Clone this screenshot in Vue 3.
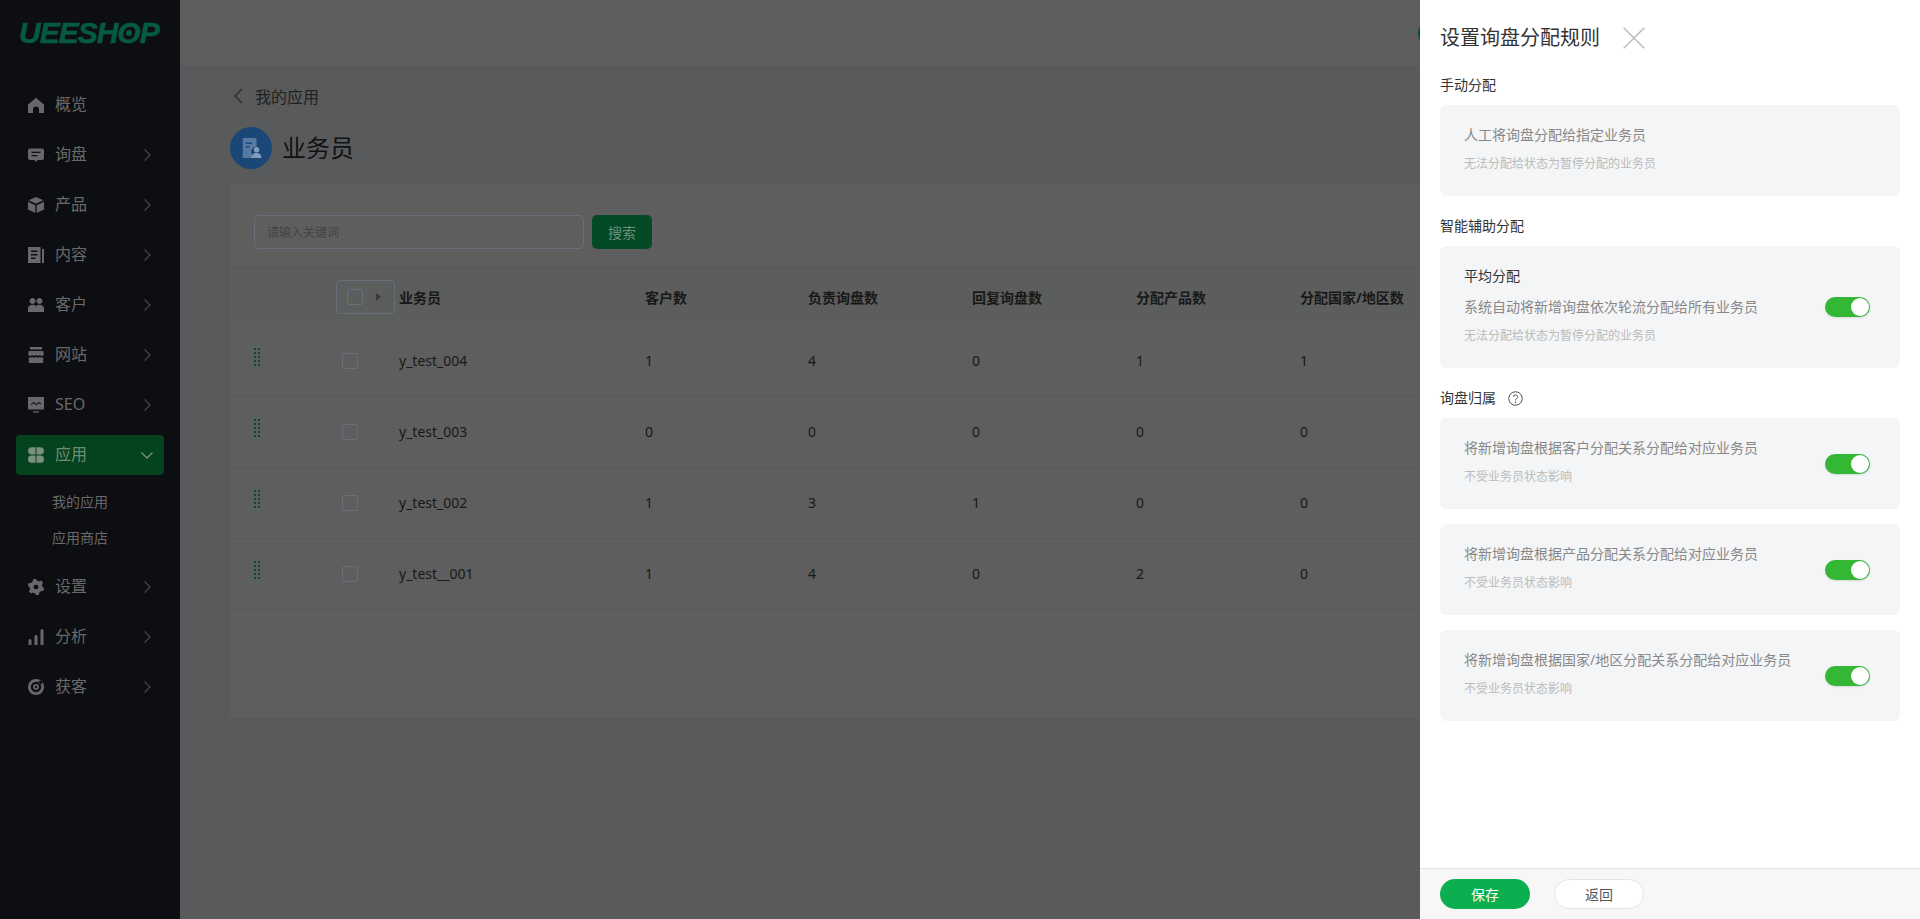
<template>
  <div class="page">
    <aside class="sidebar">
      <div class="logo">UEESH<span class="logo-o">O<i></i></span>P</div>
      <nav class="nav">
        <template v-for="item in menu" :key="item.name">
          <div class="nav-item" :class="{ active: item.open }">
            <svg class="nav-icon" viewBox="0 0 16 16"><path :d="item.icon" fill-rule="evenodd" /></svg>
            <span class="nav-text">{{ item.name }}</span>
            <svg v-if="item.arrow" class="nav-arrow" :class="{ down: item.open }" viewBox="0 0 10 14">
              <path d="M2.5 1.5 8 7l-5.500 5.500" />
            </svg>
          </div>
          <div v-if="item.open" class="sub-nav">
            <div v-for="sub in item.children" :key="sub" class="sub-item">{{ sub }}</div>
          </div>
        </template>
      </nav>
    </aside>

    <div class="main">
      <header class="topbar"><span class="avatar"></span></header>
      <section class="content">
        <div class="back">
          <svg viewBox="0 0 10 16"><path d="M9 1 2 8l7 7" /></svg>
          <span>我的应用</span>
        </div>
        <div class="page-title">
          <span class="title-icon">
            <svg viewBox="0 0 24 24">
              <path d="M3 1h15v9.500a5.500 5.500 0 0 0-4.500 9V23H3z" fill="#587aa2" />
              <path d="M6 6h7v1.500H6zM6 10h5v1.500H6z" fill="#1a4678" />
              <circle cx="18" cy="14" r="3" fill="#7f9cbe" />
              <path d="M12.500 23c0-4 2.500-5.500 5.500-5.500s5.500 1.500 5.500 5.500z" fill="#7f9cbe" />
            </svg>
          </span>
          <h1>业务员</h1>
        </div>

        <div class="card">
          <div class="toolbar">
            <div class="search-input">请输入关键词</div>
            <button class="search-btn">搜索</button>
          </div>
          <div class="table-row table-head">
            <span></span>
            <span class="head-check"><i class="check"></i><b></b></span>
            <span v-for="col in columns" :key="col">{{ col }}</span>
          </div>
          <div v-for="row in rows" :key="row.name" class="table-row body-row">
            <span class="drag"><i v-for="n in 10" :key="n"></i></span>
            <span><i class="check row-check"></i></span>
            <span>{{ row.name }}</span>
            <span v-for="(val, idx) in row.values" :key="idx">{{ val }}</span>
          </div>
        </div>
      </section>
    </div>

    <aside class="drawer">
      <div class="drawer-body">
        <div class="drawer-title">
          <h2>设置询盘分配规则</h2>
          <svg viewBox="0 0 22 22"><path d="M.7.700l20.600 20.600M21.300.700.700 21.300" /></svg>
        </div>

        <div class="group-label first">手动分配</div>
        <div class="rule">
          <div>
            <p class="rule-text">人工将询盘分配给指定业务员</p>
            <p class="rule-note">无法分配给状态为暂停分配的业务员</p>
          </div>
        </div>

        <div class="group-label">智能辅助分配</div>
        <div class="rule">
          <div>
            <p class="rule-name">平均分配</p>
            <p class="rule-text spaced">系统自动将新增询盘依次轮流分配给所有业务员</p>
            <p class="rule-note">无法分配给状态为暂停分配的业务员</p>
          </div>
          <span class="switch"></span>
        </div>

        <div class="group-label">
          询盘归属
          <svg class="help" viewBox="0 0 16 16">
            <circle cx="8" cy="8" r="7.200" />
            <path d="M5.800 6.300a2.200 2.200 0 1 1 3.300 1.900c-.8.500-1.100.9-1.100 1.800" />
            <circle class="help-dot" cx="8" cy="12" r=".8" />
          </svg>
        </div>
        <div v-for="rule in ownerRules" :key="rule" class="rule">
          <div>
            <p class="rule-text">{{ rule }}</p>
            <p class="rule-note">不受业务员状态影响</p>
          </div>
          <span class="switch"></span>
        </div>
      </div>

      <footer class="drawer-footer">
        <button class="btn-save">保存</button>
        <button class="btn-back">返回</button>
      </footer>
    </aside>
  </div>
</template>

<script setup>
// 齿轮图标用计算生成，其它图标直接写路径
function gearPath() {
  const pts = []
  for (let i = 0; i < 48; i++) {
    const a = (i / 48) * Math.PI * 2
    const r = (i + 3) % 8 < 4 ? 8.2 : 6.4
    pts.push((8 + r * Math.sin(a)).toFixed(2) + ' ' + (8 - r * Math.cos(a)).toFixed(2))
  }
  return 'M' + pts.join('L') + 'ZM8 5.700a2.300 2.300 0 1 0 .01 0Z'
}

const menu = [
  { name: '概览', icon: 'M8 .8 15.800 7.500c.3.3.2.7.2 1V16h-5v-3.500a3 3 0 0 0-6 0V16H0V8.500c0-.3-.1-.7.2-1Z' },
  { name: '询盘', arrow: true, icon: 'M2 1.500h12a2 2 0 0 1 2 2V11a2 2 0 0 1-2 2H9.500L8 15 6.500 13H2a2 2 0 0 1-2-2V3.500a2 2 0 0 1 2-2ZM3.500 4.700V6h9V4.700ZM3.500 8v1.300h6V8Z' },
  { name: '产品', arrow: true, icon: 'M8 0 15.500 3.300 8 6.800.5 3.300ZM0 4.800l7.300 3.400V16L0 12.600ZM16 4.800 8.700 8.200V16L16 12.600Z' },
  { name: '内容', arrow: true, icon: 'M0 0h12.500v16H0ZM3 3.500v1.500h6.500V3.500ZM3 7v1.500h6.500V7ZM3 10.500V12h4.500v-1.500ZM14 2h2v14h-2Z' },
  { name: '客户', arrow: true, icon: 'M4.500 1a3 3 0 1 0 .01 0ZM11.500 1a3 3 0 1 0 .01 0ZM0 15v-3.500C0 9 2 7.800 4.500 7.800c1.200 0 2.500.3 3.500 1.200 1-.9 2.300-1.200 3.500-1.200C14 7.800 16 9 16 11.500V15Z' },
  { name: '网站', arrow: true, icon: 'M2 0h12v2.500H2ZM.8 4h14.400L16 7.500c-1.500 2-3 1.500-4 .5-1.200 1-2.800 1-4 0-1.200 1-2.800 1-4 0-1 1-2.500 1.500-4-.5ZM.8 10c1.200.8 2.300.6 3.200 0 1.200.8 2.800.8 4 0 1.200.8 2.800.8 4 0 .9.600 2 .8 3.200 0V15a1 1 0 0 1-1 1H1.800a1 1 0 0 1-1-1Z' },
  { name: 'SEO', arrow: true, icon: 'M0 0h16v12.500H0ZM3 7.200l2.500-2.400 3 2.200 2.500-2 2 1.200v1.200l-2-1.200-2.500 2-3-2.200L3 8.400ZM5 14.300h6v1.200H5Z' },
  {
    name: '应用', arrow: true, open: true, children: ['我的应用', '应用商店'],
    icon: 'M3.700.200h3.800v7.300H3.700a3.650 3.650 0 0 1 0-7.300ZM8.500.200h3.800a3.650 3.650 0 0 1 0 7.300H8.500ZM0 12.200a3.650 3.650 0 0 1 3.700-3.700h3.800v7.300H3.700A3.650 3.650 0 0 1 0 12.200ZM8.500 8.500h3.800a3.650 3.650 0 0 1 0 7.300H8.500Z'
  },
  { name: '设置', arrow: true, icon: gearPath() },
  { name: '分析', arrow: true, icon: 'M.5 11.500a1.500 1.500 0 0 1 3 0V16h-3ZM6.500 7.500a1.500 1.500 0 0 1 3 0V16h-3ZM12.500 1.500a1.500 1.500 0 0 1 3 0V16h-3Z' },
  { name: '获客', arrow: true, icon: 'M8 0a8 8 0 1 0 .01 0ZM8 2.800a5.200 5.200 0 1 1-.01 0ZM8 5a3 3 0 1 0 .01 0ZM8 6.800a1.200 1.200 0 1 1-.01 0ZM13 .5l.6 1.900 1.900.6-2.500 2.500-1.800-.7-.7-1.800Z' }
]

const columns = ['业务员', '客户数', '负责询盘数', '回复询盘数', '分配产品数', '分配国家/地区数']

const rows = [
  { name: 'y_test_004', values: [1, 4, 0, 1, 1] },
  { name: 'y_test_003', values: [0, 0, 0, 0, 0] },
  { name: 'y_test_002', values: [1, 3, 1, 0, 0] },
  { name: 'y_test__001', values: [1, 4, 0, 2, 0] }
]

const ownerRules = [
  '将新增询盘根据客户分配关系分配给对应业务员',
  '将新增询盘根据产品分配关系分配给对应业务员',
  '将新增询盘根据国家/地区分配关系分配给对应业务员'
]
</script>

<style>
html, body {
  margin: 0;
  height: 100%;
  overflow: hidden;
}
</style>

<style scoped>
* {
  box-sizing: border-box;
}

.page {
  position: relative;
  display: flex;
  height: 919px;
  overflow: hidden;
  font-family: "Noto Sans", "Noto Sans CJK SC", sans-serif;
  font-size: 14px;
  color: #181818;
  background: #595a5b;
}

/* 左侧菜单 */
.sidebar {
  flex: 0 0 180px;
  background: #0d0e11;
}

.logo {
  height: 85px;
  padding: 15px 0 0 19px;
  font-family: "Liberation Sans", sans-serif;
  font-size: 30px;
  line-height: 36px;
  font-weight: 700;
  font-style: italic;
  letter-spacing: -1px;
  color: #055a44;
  -webkit-text-stroke: 0.5px #055a44;
}

.logo-o {
  position: relative;
}

.logo-o i {
  position: absolute;
  left: 9px;
  top: 14px;
  width: 6px;
  height: 6px;
  border-radius: 50%;
  background: #055a44;
}

.nav-item {
  display: flex;
  align-items: center;
  height: 40px;
  margin: 0 16px 10px;
  padding: 0 12px;
  border-radius: 4px;
  color: #696969;
  font-size: 16px;
}

.nav-item.active {
  background: #04431d;
  color: #6f8a78;
}

.nav-icon {
  width: 16px;
  height: 16px;
  margin-right: 11px;
  fill: #66686a;
}

.active .nav-icon {
  fill: #7a9182;
}

.nav-text {
  flex: 1;
  height: 24px;
  padding-bottom: 2px;
  line-height: 22px;
}

.nav-arrow {
  width: 10px;
  height: 14px;
  fill: none;
  stroke: #444;
  stroke-width: 1.300;
}

.nav-arrow.down {
  width: 14px;
  height: 14px;
  margin-right: -2px;
  stroke: #7a9182;
  transform: rotate(90deg);
}

.sub-nav {
  margin-bottom: 10px;
}

.sub-item {
  height: 36px;
  padding-left: 52px;
  font-size: 14px;
  line-height: 34px;
  color: #696969;
}

/* 主体 */
.main {
  flex: 1;
  min-width: 0;
}

.topbar {
  display: flex;
  justify-content: flex-end;
  align-items: center;
  height: 66px;
  padding-right: 472px;
  background: #5e5e5e;
}

.avatar {
  width: 30px;
  height: 30px;
  border-radius: 50%;
  background: #05502a;
}

.content {
  padding: 20px 40px 0 50px;
}

.back {
  display: flex;
  align-items: center;
  height: 24px;
  padding-bottom: 4px;
  font-size: 16px;
  color: #222;
}

.back svg {
  width: 10px;
  height: 16px;
  margin: 0 12px 0 3px;
  fill: none;
  stroke: #2b2b2b;
  stroke-width: 1.400;
}

.page-title {
  display: flex;
  align-items: center;
  margin-top: 17px;
}

.title-icon {
  display: flex;
  align-items: center;
  justify-content: center;
  width: 42px;
  height: 42px;
  border-radius: 50%;
  background: #1a4678;
}

.title-icon svg {
  width: 22px;
  height: 22px;
}

.page-title h1 {
  margin: 0 0 0 10px;
  font-size: 24px;
  line-height: 42px;
  font-weight: 400;
  color: #111;
}

.card {
  height: 533px;
  margin-top: 16px;
  border-radius: 4px;
  background: #5e5e5e;
}

.toolbar {
  display: flex;
  gap: 8px;
  height: 82px;
  padding: 30px 24px 0;
}

.search-input {
  width: 330px;
  height: 34px;
  padding-left: 12px;
  border: 1px solid #666f7b;
  border-radius: 5px;
  font-size: 12px;
  line-height: 33px;
  color: #444;
}

.search-btn {
  width: 60px;
  height: 34px;
  border: 0;
  border-radius: 5px;
  padding: 0;
  background: #044a24;
  font: inherit;
  color: #6f8d7b;
}

.table-row {
  display: grid;
  grid-template-columns: 82px 63px 246px 163px 164px 164px 164px 1fr;
  align-items: center;
  height: 71px;
  padding-left: 24px;
  border-bottom: 1px solid #565758;
}

.body-row {
  padding-bottom: 2px;
}

.table-head {
  height: 59px;
  border-top: 1px solid #565859;
  border-bottom: 0;
  font-weight: 700;
  background: #5c5d5d;
}

.head-check {
  display: flex;
  align-items: center;
  width: 59px;
  height: 34px;
  padding-left: 10px;
  border: 1px solid #666f7b;
  border-radius: 4px;
}

.head-check b {
  margin-left: 13px;
  border-left: 5px solid #3a3a3a;
  border-top: 4px solid transparent;
  border-bottom: 4px solid transparent;
}

.check {
  display: block;
  width: 16px;
  height: 16px;
  border: 1px solid #666f7b;
  border-radius: 2px;
}

.row-check {
  margin: 2px 0 0 6px;
}

.drag {
  display: grid;
  grid-template-columns: 2px 2px;
  gap: 2px;
  width: 6px;
  margin-top: -6px;
}

.drag i {
  height: 2px;
  background: #044f22;
}

/* 右侧抽屉 */
.drawer {
  position: absolute;
  top: 0;
  right: 0;
  bottom: 0;
  display: flex;
  flex-direction: column;
  width: 500px;
  background: #fff;
}

.drawer-body {
  flex: 1;
  padding: 23px 20px 0;
}

.drawer-title {
  display: flex;
  align-items: center;
}

.drawer-title h2 {
  margin: 0;
  font-size: 20px;
  line-height: 30px;
  font-weight: 400;
  color: #333;
}

.drawer-title svg {
  width: 22px;
  height: 22px;
  margin-left: 23px;
  fill: none;
  stroke: #bdbdbd;
  stroke-width: 1.500;
}

.group-label {
  display: flex;
  align-items: center;
  height: 20px;
  padding-bottom: 2px;
  margin: 20px 0 10px;
  color: #333;
}

.group-label.first {
  margin-top: 22px;
}

.help {
  width: 15px;
  height: 15px;
  margin: 2px 0 0 12px;
  fill: none;
  stroke: #444;
  stroke-width: 1;
}

.help-dot {
  fill: #444;
  stroke: none;
}

.rule {
  display: flex;
  align-items: center;
  justify-content: space-between;
  padding: 20px 30px 23px 24px;
  border-radius: 6px;
  background: #f4f5f7;
}

.rule + .rule {
  margin-top: 15px;
}

.rule p {
  margin: 0;
}

.rule-name {
  height: 20px;
  line-height: 20px;
  color: #333;
}

.rule-text {
  line-height: 20px;
  color: #888;
}

.rule-text.spaced {
  margin-top: 11px !important;
}

.rule-note {
  margin-top: 10px !important;
  font-size: 12px;
  line-height: 18px;
  color: #bbb;
}

.switch {
  position: relative;
  flex: 0 0 45px;
  height: 20px;
  margin-top: 3px;
  border-radius: 10px;
  background: #35b736;
  box-shadow: 0 1px 2px rgba(0, 0, 0, 0.12);
}

.switch::after {
  content: "";
  position: absolute;
  top: 1px;
  right: 1px;
  width: 18px;
  height: 18px;
  border-radius: 50%;
  background: #fff;
}

.drawer-footer {
  display: flex;
  align-items: center;
  gap: 24px;
  height: 51px;
  padding-left: 20px;
  border-top: 1px solid #e5e5e5;
  background: #f7f7f7;
}

.drawer-footer button {
  width: 90px;
  height: 30px;
  padding: 0;
  border-radius: 15px;
  font: inherit;
  cursor: pointer;
}

.btn-save {
  border: 0;
  background: #0baf4f;
  color: #fff;
}

.btn-back {
  border: 1px solid #e5e5e5;
  background: #fff;
  color: #555;
}
</style>
